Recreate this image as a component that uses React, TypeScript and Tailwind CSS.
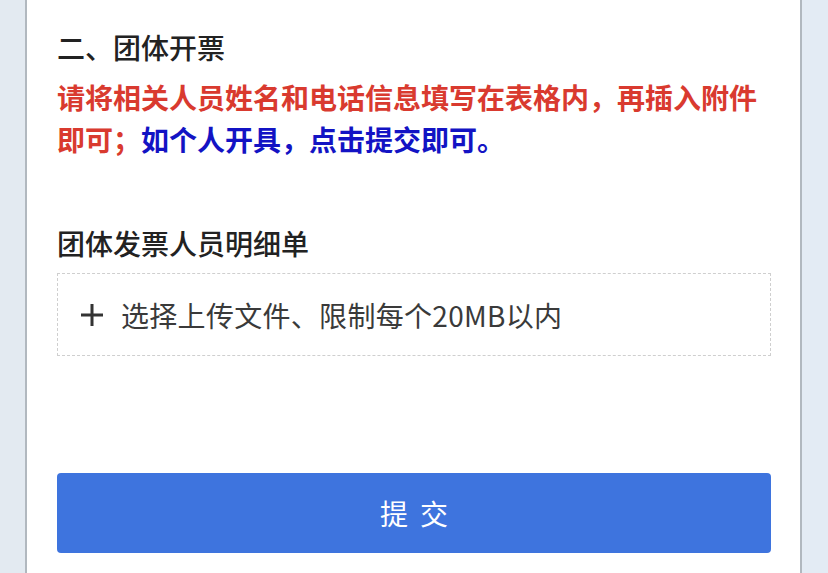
import React from "react";

export default function App() {
  const font = { fontFamily: '"Noto Sans CJK SC", "Noto Sans", sans-serif' };
  return (
    <div className="flex h-[573px] w-[828px] overflow-hidden bg-[#e6edf4]" style={font}>
      <div className="w-[25px] shrink-0 bg-[#e3eaf1]" />
      <div className="flex w-[777px] shrink-0 flex-col border-x-2 border-[#b1b8bf] bg-white pl-[30px] pr-[29px] pt-[26px]">
        <div className="text-[28px] leading-[42px] font-medium text-[#222222]">二、团体开票</div>
        <div className="mt-2 text-[28px] leading-[42px] font-bold text-[#d93a2f]">
          请将相关人员姓名和电话信息填写在表格内，再插入附件即可；<span className="text-[#1313c4]">如个人开具，点击提交即可。</span>
        </div>
        <div className="mt-[62px] text-[28px] leading-[42px] font-medium text-[#222222]">团体发票人员明细单</div>
        <div className="mt-[9px] flex h-[83px] items-center border border-dashed border-[#cfcfcf] pl-[22px]">
          <svg width="24" height="24" viewBox="0 0 24 24" className="mr-[17px]">
            <path d="M12 1v22M1 12h22" stroke="#333" strokeWidth="3" />
          </svg>
          <span className="text-[28px] leading-[42px] tracking-[0.3px] text-[#3a3a3a]">选择上传文件、限制每个20MB以内</span>
        </div>
        <button className="mt-[117px] flex h-[80px] w-full items-center justify-center rounded-[4px] bg-[#3e74de] text-[28px] tracking-[12px] text-white">
          <span className="pl-[12px]">提交</span>
        </button>
      </div>
      <div className="flex-1 bg-[#e3ebf4]" />
    </div>
  );
}
